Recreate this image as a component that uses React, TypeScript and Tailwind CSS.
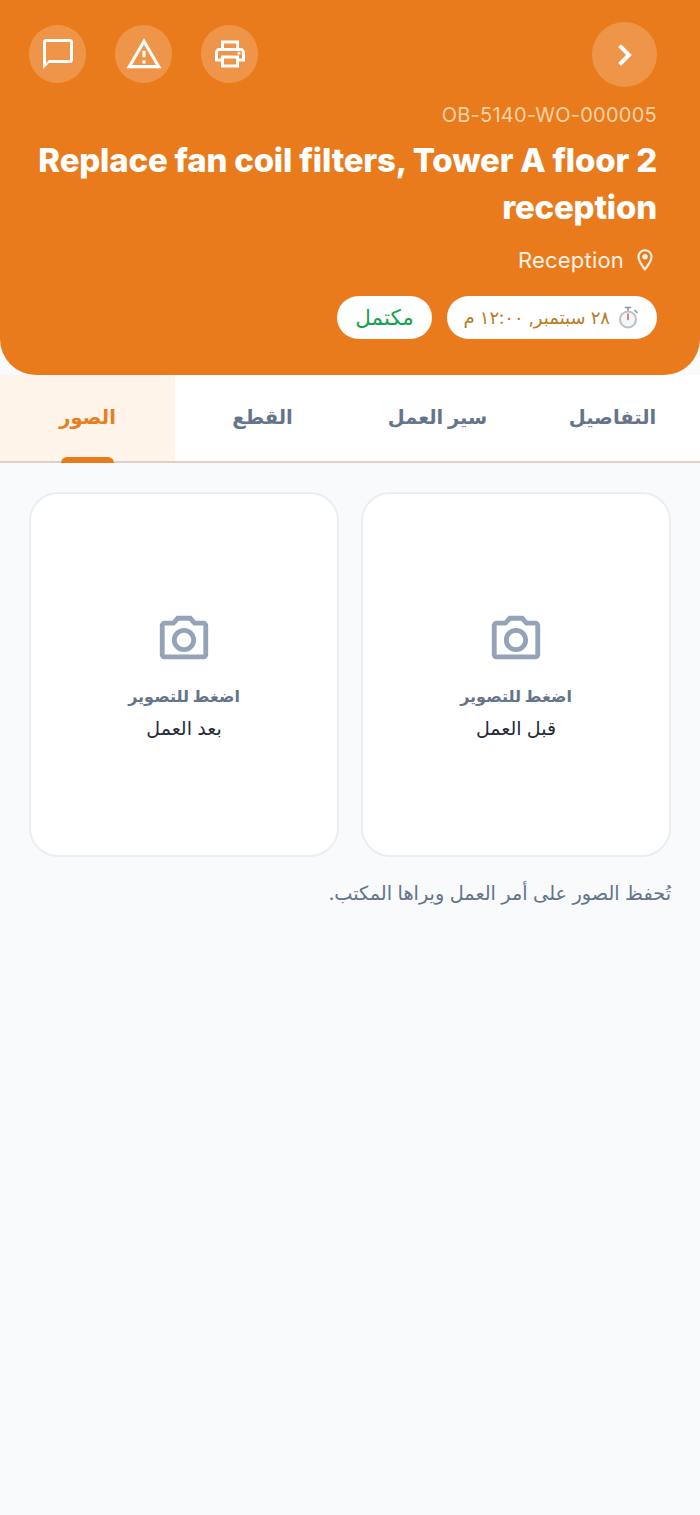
import React from "react";
import { MdOutlineChatBubbleOutline, MdOutlinePrint, MdOutlinePhotoCamera, MdOutlineLocationOn } from "react-icons/md";
import { ChevronRight } from "lucide-react";

function Circle({ children }: { children: React.ReactNode }) {
  return (
    <button className="w-[57.3px] h-[57.6px] rounded-full bg-white/20 flex items-center justify-center text-white">
      {children}
    </button>
  );
}

function WarningIcon() {
  return (
    <svg width="38" height="38" viewBox="0 0 24 24" fill="currentColor">
      <path d="M12 5.99L19.53 19H4.47L12 5.99M12 2L1 21h22L12 2zm1 14h-2v2h2v-2zm0-6h-2v4h2v-4z" />
    </svg>
  );
}

function Stopwatch() {
  return (
    <svg width="22" height="24" viewBox="0 0 22 24" fill="none">
      <path d="M8.5 1.5h5M11 1.5v3M18 4.5l2 2" stroke="#8a949f" strokeWidth="1.6" strokeLinecap="round" />
      <circle cx="11" cy="13.5" r="9" fill="#b8c0c8" />
      <circle cx="11" cy="13.5" r="7" fill="#f4f6f7" />
      <path d="M11 13.5V8" stroke="#c9574f" strokeWidth="1.4" strokeLinecap="round" />
    </svg>
  );
}

function PhotoCard({ label }: { label: string }) {
  return (
    <div className="flex-1 h-[365px] rounded-[29px] border-2 border-[#eaeef3] bg-white flex flex-col items-center justify-center">
      <MdOutlinePhotoCamera size={58} className="text-[#94a3b8] mt-[4px]" />
      <div className="mt-[14px] text-[16px] leading-[26px] font-bold text-[#64748b]">اضغط للتصوير</div>
      <div className="mt-[7px] text-[19px] leading-[26px] text-[#1f2937]">{label}</div>
    </div>
  );
}

const tabs = ["التفاصيل", "سير العمل", "القطع", "الصور"];

export default function App() {
  return (
    <div dir="rtl" className="w-[700px] h-[1515px] bg-[#f8fafc] font-['Inter','DejaVu_Sans',sans-serif]">
      <header className="h-[375px] bg-[#ea7b1c] rounded-b-[36px] pt-[22px] pr-[43px] pl-[29px]">
        <div className="flex items-center justify-between h-[65px]">
          <button className="w-[65px] h-[65px] rounded-full bg-white/20 flex items-center justify-center text-white">
            <ChevronRight size={32} strokeWidth={3} strokeLinecap="square" strokeLinejoin="miter" />
          </button>
          <div className="flex items-center gap-[28.8px] mt-[-1px]">
            <Circle><MdOutlinePrint size={36} /></Circle>
            <Circle><WarningIcon /></Circle>
            <Circle><MdOutlineChatBubbleOutline size={36} /></Circle>
          </div>
        </div>
        <div className="mt-[14px] text-[20px] leading-[29px] text-[#fbd3a9] tracking-[0.25px]">OB-5140-WO-000005</div>
        <h1 className="mt-[7px] text-[33px] leading-[47px] font-extrabold text-white text-right tracking-[-0.2px]">
          Replace fan coil filters, Tower A floor 2 reception
        </h1>
        <div className="mt-[13px] flex items-center gap-[8px] text-white/90 text-[22px] leading-[32px] tracking-[0.2px]">
          <MdOutlineLocationOn size={26} className="mr-[-1px]" />
          <span>Reception</span>
        </div>
        <div className="mt-[20px] flex items-center gap-[15px]">
          <div className="h-[43px] w-[210px] rounded-full bg-white flex items-center pr-[18px] gap-[7px] text-[18px] text-[#b97a1e] whitespace-nowrap">
            <Stopwatch />
            <span>٢٨ سبتمبر, ١٢:٠٠ م</span>
          </div>
          <div className="h-[43px] w-[95px] rounded-full bg-white flex items-center justify-center text-[21.5px] text-[#16a34a]">مكتمل</div>
        </div>
      </header>
      <nav className="flex h-[88px] bg-white border-b-2 border-[#dfcfc6]">
        {tabs.map((t, i) => (
          <div key={t} className={`relative w-[175px] flex items-center justify-center text-[19.5px] font-bold ${i === 3 ? "bg-[#fff4ea] text-[#e67e22]" : "text-[#64748b]"}`}>
            {t}
            {i === 3 && <span className="absolute bottom-[-2px] left-[61px] w-[53px] h-[6px] rounded-t-[6px] bg-[#ea7b1c]" />}
          </div>
        ))}
      </nav>
      <main className="px-[29px] pt-[29px]">
        <div className="flex gap-[22px]">
          <PhotoCard label="قبل العمل" />
          <PhotoCard label="بعد العمل" />
        </div>
        <p className="mt-[22px] text-[19.3px] leading-[28px] text-[#64748b]">تُحفظ الصور على أمر العمل ويراها المكتب.</p>
      </main>
    </div>
  );
}
